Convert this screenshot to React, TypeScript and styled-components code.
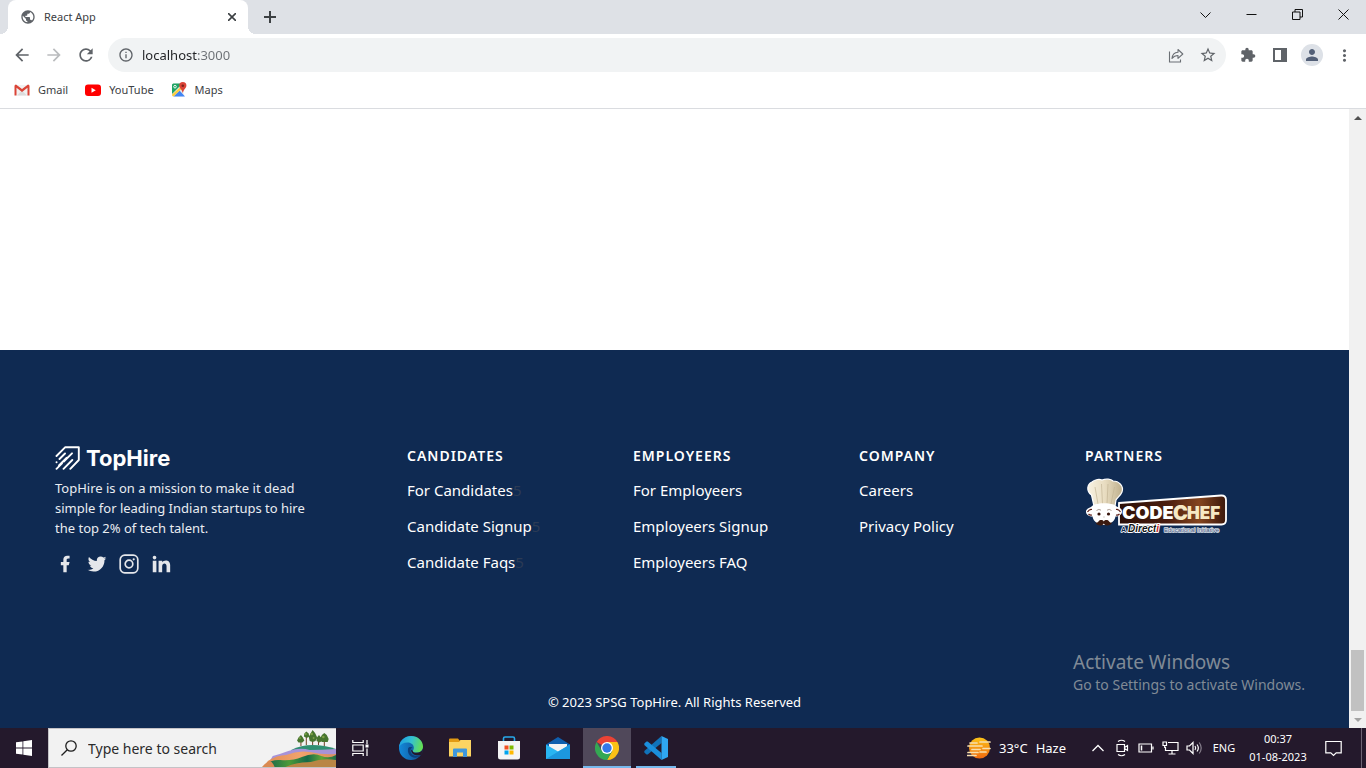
import React from 'react';
import styled, { createGlobalStyle } from 'styled-components';
import { RiFacebookFill, RiTwitterFill, RiLinkedinFill } from 'react-icons/ri';
import {
  MdPublic,
  MdExtension,
  MdArrowBack,
  MdArrowForward,
  MdRefresh,
  MdInfoOutline,
  MdStarBorder,
  MdPerson,
  MdMoreVert,
} from 'react-icons/md';

const GlobalStyle = createGlobalStyle`
  *, *::before, *::after { box-sizing: border-box; }
  body {
    margin: 0;
    font-family: 'Noto Sans', 'Open Sans', sans-serif;
    background: #fff;
    overflow: hidden;
  }
  button, input { font: inherit; color: inherit; }
  button { border: 0; padding: 0; background: none; cursor: pointer; }
  a { color: inherit; text-decoration: none; }
  ul { list-style: none; margin: 0; padding: 0; }
  svg { display: block; flex: none; }
`;

const Desktop = styled.div`
  display: flex;
  flex-direction: column;
  height: 100vh;
`;

/* ---------- Browser chrome ---------- */

const TabStrip = styled.header`
  display: flex;
  height: 34px;
  padding-left: 8px;
  background: #dee1e6;
`;

const Tab = styled.div`
  display: flex;
  align-items: center;
  position: relative;
  width: 240px;
  padding: 0 8px 0 12px;
  border-radius: 8px 8px 0 0;
  background: #fff;
  color: #3c4043;
  font-size: 11px;

  &::before,
  &::after {
    content: '';
    position: absolute;
    bottom: 0;
    width: 8px;
    height: 8px;
  }
  &::before {
    left: -8px;
    background: radial-gradient(circle at 0 0, transparent 8px, #fff 8px);
  }
  &::after {
    right: -8px;
    background: radial-gradient(circle at 100% 0, transparent 8px, #fff 8px);
  }
`;

const TabTitle = styled.span`
  flex: 1;
  margin-left: 8px;
  line-height: 14px;
`;

const IconButton = styled.button<{ $size?: number; $color?: string }>`
  display: flex;
  flex: none;
  align-items: center;
  justify-content: center;
  width: ${({ $size = 28 }) => $size}px;
  height: ${({ $size = 28 }) => $size}px;
  color: ${({ $color = '#5f6368' }) => $color};
`;

const NewTab = styled(IconButton)`
  margin: 3px 0 0 8px;
`;

const WindowControls = styled.div`
  display: flex;
  margin-left: auto;
`;

const WindowButton = styled.button`
  display: flex;
  align-items: center;
  justify-content: center;
  width: 46px;
  height: 28px;
`;

const Toolbar = styled.nav`
  display: flex;
  flex: none;
  align-items: center;
  gap: 4px;
  height: 42px;
  padding: 0 8px;
`;

const Omnibox = styled.form`
  display: flex;
  flex: 1;
  align-items: center;
  gap: 4px;
  height: 34px;
  margin: 0 4px;
  padding: 0 4px 0 10px;
  border-radius: 17px;
  background: #f1f3f4;
  color: #5f6368;
`;

const AddressInput = styled.input`
  flex: 1;
  min-width: 0;
  margin-left: 4px;
  padding: 0;
  border: 0;
  outline: 0;
  background: linear-gradient(90deg, #202124 56px, #6b6f74 56px);
  background-clip: text;
  -webkit-text-fill-color: transparent;
  font-size: 13px;
`;

const Avatar = styled.span`
  display: flex;
  align-items: center;
  justify-content: center;
  width: 22px;
  height: 22px;
  border-radius: 50%;
  background: #dde1e7;
  color: #525f77;
`;

const Bookmarks = styled.nav`
  display: flex;
  flex: none;
  gap: 1px;
  height: 33px;
  padding: 0 6px 4px;
  border-bottom: 1px solid #dadce0;
  color: #3c4043;
  font-size: 11px;
  line-height: 14px;
`;

const Bookmark = styled.a`
  display: flex;
  align-items: center;
  gap: 8px;
  padding: 0 8px;
`;

/* ---------- Page ---------- */

const Viewport = styled.div`
  display: flex;
  flex: 1;
  min-height: 0;
  position: relative;
`;

const Page = styled.main`
  display: flex;
  flex: 1;
  flex-direction: column;
  justify-content: flex-end;
  overflow: hidden;
  background: #fff;
`;

const Footer = styled.footer`
  background: #0f2a52;
  color: #fff;
`;

const FooterColumns = styled.div`
  display: grid;
  grid-template-columns: 352fr 226fr 226fr 226fr 210fr;
  padding: 96px 54px 96px 55px;
`;

const Brand = styled.a`
  display: flex;
  align-items: center;
  gap: 6px;
  height: 24px;
  font-family: Inter, sans-serif;
  font-size: 22px;
  font-weight: 700;
  line-height: 24px;
`;

const Mission = styled.p`
  max-width: 264px;
  margin: 8px 0 16px;
  color: #e9ecf1;
  font-size: 13px;
  line-height: 20px;
`;

const SocialLinks = styled.div`
  display: flex;
  gap: 12px;
  color: #e5e7eb;
`;

const SocialLink = styled.a`
  display: flex;
  align-items: center;
  justify-content: center;
  width: 20px;
  height: 20px;
`;

const ColumnHeading = styled.h2`
  margin: 0 0 12px;
  font-size: 14px;
  font-weight: 600;
  letter-spacing: 1px;
  line-height: 20px;
`;

const LinkList = styled.ul`
  display: grid;
  gap: 12px;
  font-size: 15px;
  line-height: 24px;
`;

const FaintMark = styled.span`
  color: #2c3b55;
`;

const Copyright = styled.p`
  margin: 0;
  padding: 22px 16px 16px;
  font-size: 13px;
  line-height: 20px;
  text-align: center;
`;

const Scrollbar = styled.div`
  display: flex;
  flex-direction: column;
  width: 17px;
  background: #f1f1f1;
`;

const ScrollArrow = styled(IconButton)`
  width: 17px;
  height: 17px;
`;

const ScrollTrack = styled.div`
  display: flex;
  flex: 1;
  flex-direction: column;
  justify-content: flex-end;
  padding: 0 2px;
`;

const ScrollThumb = styled.div`
  height: 61px;
  background: #c1c1c1;
`;

const Watermark = styled.div`
  position: absolute;
  right: 57px;
  bottom: 32px;
  width: 236px;
  color: #808a96;
  font-size: 14px;
  line-height: 22px;
  white-space: nowrap;
`;

const WatermarkTitle = styled.div`
  font-size: 19px;
  line-height: 24px;
`;

/* ---------- Taskbar ---------- */

const Taskbar = styled.footer`
  display: flex;
  flex: none;
  height: 40px;
  background: #24192c;
  color: #fff;
`;

const TaskButton = styled.button<{ $active?: boolean }>`
  display: flex;
  align-items: center;
  justify-content: center;
  width: 48px;
  background: ${({ $active }) => ($active ? '#50485a' : 'none')};
`;

const AppButton = styled(TaskButton)<{ $open?: boolean }>`
  position: relative;

  &::after {
    content: '';
    display: ${({ $open, $active }) => ($open || $active ? 'block' : 'none')};
    position: absolute;
    right: ${({ $active }) => ($active ? 0 : 4)}px;
    bottom: 0;
    left: ${({ $active }) => ($active ? 0 : 4)}px;
    height: 2px;
    background: #76b9ed;
  }
`;

const PinnedApps = styled.div`
  display: flex;
  gap: 1px;
  margin-left: 3px;
`;

const SearchBox = styled.label`
  display: flex;
  align-items: center;
  width: 288px;
  padding-left: 12px;
  border: 1px solid #c4c2c6;
  border-right: 0;
  background: #f2f2f2;
  color: #1f1f1f;
`;

const SearchInput = styled.input`
  flex: 1;
  min-width: 0;
  margin-left: 11px;
  padding: 0;
  border: 0;
  outline: 0;
  background: none;
  font-size: 14px;

  &::placeholder {
    color: #2b2b2b;
    opacity: 1;
  }
`;

const Tray = styled.div`
  display: flex;
  margin-left: auto;
  padding-right: 14px;
  background: linear-gradient(90deg, transparent calc(100% - 5px), #6d6474 calc(100% - 5px), #6d6474 calc(100% - 4px), transparent calc(100% - 4px));
`;

const Weather = styled.button`
  display: flex;
  align-items: center;
  gap: 8px;
  width: 119px;
  font-size: 13px;
  white-space: nowrap;
`;

const TrayButton = styled.button<{ $width?: number }>`
  display: flex;
  align-items: center;
  justify-content: center;
  width: ${({ $width = 24 }) => $width}px;
  font-size: 11px;
  line-height: 18px;
`;

/* ---------- Drawings ---------- */

const GmailIcon = () => (
  <svg width="16" height="16" viewBox="0 0 16 16">
    <path d="M1.500 3h13v10.500h-13z" fill="#f1f1f1" />
    <path d="m3 13.500 5-5 5 5z" fill="#dcdcdc" />
    <path d="M.5 4Q.5 2.500 2 2.500L8 7l6-4.500q1.500 0 1.500 1.500v9.500h-2V5.800L8 10 2.500 5.800v7.700h-2z" fill="#db4437" />
  </svg>
);

const YouTubeIcon = () => (
  <svg width="16" height="16" viewBox="0 0 16 16">
    <rect y="2.500" width="16" height="11.500" rx="3" fill="#f00" />
    <path d="M6.500 5.700v5l4.300-2.500z" fill="#fff" />
  </svg>
);

const MapsIcon = () => (
  <svg width="16" height="16" viewBox="0 0 16 16">
    <path d="M1 3q0-1.500 1.500-1.500h10v13H2.500Q1 14.500 1 13z" fill="#e9e9e9" />
    <path d="M1 3q0-1.500 1.500-1.500h9L1 12z" fill="#1fa463" />
    <path d="m2.500 14.500 6-6 5.500 6z" fill="#4285f4" />
    <path d="M1 12.500 9.500 5l1.500 1.500-8.500 8Q1 14.500 1 12.500z" fill="#fbcd3f" />
    <circle cx="4" cy="4.700" r="1.300" fill="none" stroke="#fff" strokeWidth=".9" />
    <path d="M11.800 0a3.600 3.600 0 0 0-3.600 3.600c0 2.600 2.600 3.700 3.600 7.400 1-3.700 3.600-4.800 3.600-7.400A3.600 3.600 0 0 0 11.800 0z" fill="#db4437" />
    <circle cx="11.800" cy="3.700" r="1.300" fill="#7b231c" />
  </svg>
);

const ShareIcon = () => (
  <svg width="18" height="18" viewBox="0 0 18 18" fill="none" stroke="#6b6f74" strokeWidth="1.100">
    <path d="M2.500 5.500v10.500h11v-2.500" />
    <path d="M5 12.500c.4-4 2.700-6 6-6.200V3.500l4.800 4.500-4.800 4.300V9.500c-2.600 0-4.300.8-6 3z" strokeLinejoin="round" />
  </svg>
);

const SidePanelIcon = () => (
  <svg width="16" height="16" viewBox="0 0 16 16">
    <path d="M1 1h14v14H1zM3 3v10h6V3z" fill="#5f6368" fillRule="evenodd" />
  </svg>
);

const BrandMark = () => (
  <svg width="25" height="24" viewBox="0 0 25 24" fill="none" stroke="#fff" strokeWidth="1.900" strokeLinecap="round">
    <path d="M1.500 10 10.300 1.200H23.800V14l-8.500 8.800" strokeLinejoin="round" />
    <path d="m4.500 13 5.500-5.500M1.500 16.200h.1M1.500 22.800 7 17.300M8.800 15.500 17 7.300M4 19.300l7.500-7.500M8.500 22.800 17.300 14" />
  </svg>
);

const InstagramIcon = () => (
  <svg width="20" height="20" viewBox="0 0 20 20" fill="none" stroke="currentColor" strokeWidth="1.700">
    <rect x="1.200" y="1.200" width="17.600" height="17.600" rx="4.500" />
    <circle cx="10" cy="10" r="3.800" />
    <circle cx="14.700" cy="5.300" r="1.100" fill="currentColor" stroke="none" />
  </svg>
);

const CodeChefLogo = () => (
  <svg width="144" height="58" viewBox="0 0 144 58" role="img" aria-label="CodeChef, a Directi educational initiative">
    <defs>
      <linearGradient id="board" x1="0" x2="1">
        <stop offset="0" stopColor="#2a0f08" />
        <stop offset=".45" stopColor="#4a1d0e" />
        <stop offset=".75" stopColor="#84451f" />
        <stop offset="1" stopColor="#3a170b" />
      </linearGradient>
      <linearGradient id="hat" x1="0" x2="1">
        <stop offset="0" stopColor="#f8f2e2" />
        <stop offset=".5" stopColor="#e8dcc0" />
        <stop offset="1" stopColor="#bdae8b" />
      </linearGradient>
    </defs>
    <path d="m34 25 102-7.500q5-.3 5 4.500v20q0 4.500-4.500 4.500H34z" fill="url(#board)" stroke="#fff" strokeWidth="1.800" />
    <path d="M9 28 6.500 17C1 13 2 6 7 4c3-3 8-3 10-2 4-1.500 9-1 11 1 6 0 11 5 9 11-1 3-5 6-6 8l-1 6z" fill="url(#hat)" stroke="#fff" strokeWidth="1.200" />
    <path d="m10 9 3 17M16.500 6l1 20M23 6l-1 20M29.500 9 26 26" fill="none" stroke="#c3b595" strokeWidth=".7" />
    <path d="M8 27c6-2.500 16-2.500 22 0 1 2.500 7 2 7 6.500 0 3.500-3.500 5-6.500 5-1 5.500-6 8.500-11.500 8.500S8.500 44 7.500 38.500c-3.500 0-6.500-1.500-6.500-5S7 29.500 8 27z" fill="#fff" />
    <path d="M2.500 34q2-3 4.500-2.500M35.500 34q-2-3-4.500-2.500M3.500 36q1.500 1.500 3.500 1M34.500 36q-1.500 1.500-3.500 1" fill="none" stroke="#5b1a12" strokeWidth="1.200" />
    <path d="M11.500 32.500q2.500-2 4.500-.3M22 32.200q2.200-1.700 4.500.3" fill="none" stroke="#8a7467" strokeWidth=".7" />
    <circle cx="14" cy="36" r="1.600" fill="#3a160d" />
    <circle cx="23.500" cy="36" r="1.600" fill="#3a160d" />
    <path d="M18.500 39q.5.800 1 0" fill="none" stroke="#8a7467" strokeWidth=".7" />
    <path d="M18.800 43.500c-1-1.800-4-2-5.300 0-.8 1.200-2 1.500-3 .7 1 4 7.300 4.300 8.300 1.300 1 3 7.300 2.700 8.300-1.300-1 .8-2.200.5-3-.7-1.300-2-4.300-1.800-5.300 0z" fill="#3b1a10" />
    <g fontFamily="Inter, sans-serif" fontWeight="900" fontSize="18">
      <text x="37" y="41" fill="#fff">CODE</text>
      <text x="88" y="42" fontSize="20" fill="#f6e8c4">C</text>
      <text x="102" y="41" fontSize="17" fill="#f6e8c4">HEF</text>
    </g>
    <g fontFamily="'Liberation Sans', sans-serif" paintOrder="stroke" strokeLinejoin="round">
      <text x="36" y="54" fontSize="7" fontWeight="700" fill="#0f2a52" stroke="#fff" strokeWidth="1.500">A</text>
      <text x="43" y="54" fontSize="10" fontWeight="700" fontStyle="italic" fill="#111" stroke="#fff" strokeWidth="2">
        Direct<tspan fill="#c6201a">i</tspan>
      </text>
      <text x="79" y="54" fontSize="6" fill="#38507a" stroke="#dfe4ec" strokeWidth="1.500">Educational Initiative</text>
    </g>
  </svg>
);

const SearchScene = () => (
  <svg width="74" height="38" viewBox="0 0 76 38" preserveAspectRatio="none" aria-hidden="true">
    <defs>
      <linearGradient id="sand" x1="0" x2="1">
        <stop offset="0" stopColor="#e08a52" />
        <stop offset=".5" stopColor="#f2a36c" />
        <stop offset="1" stopColor="#d98f5c" />
      </linearGradient>
      <linearGradient id="grass" x1="0" x2="1">
        <stop offset="0" stopColor="#0e5c50" />
        <stop offset=".35" stopColor="#4c9a38" />
        <stop offset=".6" stopColor="#15694a" />
        <stop offset=".8" stopColor="#5fa437" />
        <stop offset="1" stopColor="#1d6b46" />
      </linearGradient>
    </defs>
    <path d="M30 21q10-5 22-5 12 0 24 4v6H30z" fill="#2f8f72" />
    <path d="M11 27q8-2 16-5 12-4 22-1 12 0 27-1v12H8z" fill="#a793d8" />
    <path d="M6 32q9-6 19-6 12-5 24-3 14 3 27 2v15H1z" fill="url(#sand)" />
    <path d="M2 38q6-8 17-7 12 1 22-3 12-5 20-1 8 3 15-1v13z" fill="url(#grass)" />
    <path d="M24 38q12-5 26-5 12-4 26-2v8z" fill="#b98545" />
    <path d="M0 38q3-4 8-6 3 1 5 6z" fill="#d98a52" />
    <path d="M40 17v-6M45.500 16V5M52 16V6M58 16V9M64 17V9" stroke="#6b3d22" strokeWidth="1" />
    <g fill="#47752f">
      <path d="m40 6 2 2.500 1.500 3-2 2h-4l-1.500-2 1.500-3zM45.500 2.500l2.500 2 .5 3-2.500 1.500-3-1.500.5-3zM52 1l2.500 3 2 4-1.500 4-3 1-3-1-1-4 1.500-3zM58.500 6l2.500 3 .5 3-2.500 1.500-3-1.500V9zM64 4l2.500 2 2 4-1 3h-6l-2-3 2-4z" />
    </g>
    <g fill="#7da046">
      <circle cx="39" cy="9" r="1" />
      <circle cx="45" cy="5" r="1" />
      <circle cx="51" cy="5" r="1.300" />
      <circle cx="53" cy="9" r="1" />
      <circle cx="63" cy="8" r="1.300" />
    </g>
  </svg>
);

const StartIcon = () => (
  <svg width="16" height="16" viewBox="0 0 16 16" fill="#fff">
    <path d="m0 2.300 6.500-.9v6.200H0zM7.300 1.300 16 0v7.600H7.300zM0 8.400h6.500v6.200L0 13.700zM7.300 8.400H16V16l-8.700-1.300z" />
  </svg>
);

const TaskViewIcon = () => (
  <svg width="17" height="16" viewBox="0 0 17 16" fill="none" stroke="#fff" strokeWidth="1.200">
    <path d="M.8 0v2.500h10.400V0M.8 16v-2.500h10.400V16M.8 5h10.400v6H.8zM15 0v4M15 8.500V16" />
    <path d="M13.500 4.500h3v3h-3z" fill="#fff" stroke="none" />
  </svg>
);

const EdgeIcon = () => (
  <svg width="24" height="24" viewBox="0 0 24 24">
    <defs>
      <linearGradient id="edgeTop" x1="0" x2="1" y1=".3" y2=".5">
        <stop offset="0" stopColor="#1b9de2" />
        <stop offset=".5" stopColor="#35c1d0" />
        <stop offset="1" stopColor="#66e04f" />
      </linearGradient>
      <linearGradient id="edgeLow" x1="0" x2="1">
        <stop offset="0" stopColor="#1389da" />
        <stop offset="1" stopColor="#114a8b" />
      </linearGradient>
    </defs>
    <circle cx="12" cy="12" r="12" fill="url(#edgeLow)" />
    <path d="M0 11C1 4 6 0 12 0c7 0 12 5 12 10.500 0 4-3 6-6.200 6-3 0-4.300-1-4-1.800.3-.8 1.200-1.500 1-3.500C14.300 8 11.500 6.500 8.500 6.500 4.500 6.500 1.500 8.500 0 11z" fill="url(#edgeTop)" />
    <path d="M9 13c-.8 6 4 9.500 8.500 8.500 2-.4 3.500-1.300 4.500-2-5 2-10.500-.5-10.500-5 0-1.500.8-2.500 2-3C11 10.500 9.300 11 9 13z" fill="#0c3f7c" />
    <path d="M24 12.500c-1 3-3.500 4.200-6.200 4.200-3 0-4.300-1-4-1.800l-1.500-1.500c-1 4 4 7 9.700 5.600 1-1.500 2-4 2-6.500z" fill="#24192c" />
  </svg>
);

const ExplorerIcon = () => (
  <svg width="22" height="20" viewBox="0 0 22 20">
    <path d="M0 1.500Q0 .5 1 .5h8l1.500 2H22V7H0z" fill="#e29a13" />
    <path d="M0 4h10l1.500-2H22v16.500H0z" fill="#fcd462" />
    <path d="M4 19v-7.500q0-1 1-1h12q1 0 1 1V19h-4v-4.500H8V19z" fill="#3f97dc" />
  </svg>
);

const StoreIcon = () => (
  <svg width="24" height="24" viewBox="0 0 24 24">
    <path d="M6.500 6V2.500q0-1.500 1.500-1.500h8q1.500 0 1.500 1.500V6" fill="none" stroke="#27a9ea" strokeWidth="1.600" />
    <path d="M1 5h22v16q0 2.500-2.500 2.500h-17Q1 23.500 1 21z" fill="#f4f4f5" />
    <path d="M7.500 9.500h4v4h-4z" fill="#f25022" />
    <path d="M12.500 9.500h4v4h-4z" fill="#7fba00" />
    <path d="M7.500 14.500h4v4h-4z" fill="#00a4ef" />
    <path d="M12.500 14.500h4v4h-4z" fill="#ffb900" />
  </svg>
);

const MailIcon = () => (
  <svg width="24" height="24" viewBox="0 0 24 24">
    <path d="M0 8.500 12 1l12 7.500v6H0z" fill="#0f5fae" />
    <path d="M3 8h18v5l-9 5-9-5z" fill="#f3f3f3" />
    <path d="m0 8.500 12 7 12-7V23H0z" fill="#29b5f2" />
    <path d="M0 23 24 8.500V23z" fill="#1c97de" />
  </svg>
);

const ChromeIcon = () => (
  <svg width="24" height="24" viewBox="0 0 24 24">
    <path d="M12 12 1.600 6A12 12 0 0 1 22.400 6z" fill="#ea4335" />
    <path d="M12 12V6h10.400A12 12 0 0 1 12 24l5.200-9z" fill="#fbc116" />
    <path d="M1.600 6A12 12 0 0 0 12 24l5.200-9H6.800z" fill="#34a853" />
    <circle cx="12" cy="12" r="6" fill="#fff" />
    <circle cx="12" cy="12" r="4.700" fill="#3478e8" />
  </svg>
);

const VsCodeIcon = () => (
  <svg width="24" height="24" viewBox="0 0 24 24">
    <path d="M17.500 0v7L3.700 18.400l-1.200.1-2.200-2V15z" fill="#1072b9" />
    <path d="M17.500 24v-7L3.700 5.600l-1.200-.1-2.200 2V9z" fill="#1b8fdc" />
    <path d="M17.500 0 24 3v18l-6.500 3z" fill="#2fa7f2" />
  </svg>
);

const WeatherIcon = () => (
  <svg width="24" height="22" viewBox="0 0 24 22">
    <defs>
      <linearGradient id="sun" x1="0" x2="0" y1="0" y2="1">
        <stop offset="0" stopColor="#fcc419" />
        <stop offset="1" stopColor="#f0690f" />
      </linearGradient>
    </defs>
    <circle cx="12.500" cy="11" r="10.500" fill="url(#sun)" />
    <path d="M3 6h7M13 5h10M1 9h14M5 12.500h8M16 11.500h7M1 15.500h10M13 15h6M0 18.500h9" stroke="#f8dfae" strokeWidth="1.700" strokeLinecap="round" />
  </svg>
);

const CameraIcon = () => (
  <svg width="14" height="18" viewBox="0 0 14 18" fill="none" stroke="#fff" strokeWidth="1.200">
    <path d="M3 2.500q3.500-2.500 7 0M3 15.500q3.500 2.500 7 0M2 5.500h7.500v7H2zM9.500 8.500l3-2v5l-3-2" />
  </svg>
);

const BatteryIcon = () => (
  <svg width="16" height="10" viewBox="0 0 16 10" fill="none" stroke="#fff">
    <path d="M1 1h12.500v8H1zM15 3.500v3" strokeWidth="1.200" />
    <path d="M3.500 2.500v5" strokeWidth="1.500" />
  </svg>
);

const NetworkIcon = () => (
  <svg width="17" height="14" viewBox="0 0 17 14" fill="none" stroke="#fff" strokeWidth="1.200">
    <path d="M6 1.500h10v8H3.500V6M10 9.500V13M6.500 13h7M1 1h3.500v3.500H1zM2.700 4.500V7" />
  </svg>
);

const VolumeIcon = () => (
  <svg width="17" height="14" viewBox="0 0 17 14" fill="none" stroke="#fff" strokeWidth="1.200">
    <path d="M1 5h2.500L7 1.500v11L3.500 9H1zM9 5q1.500 2 0 4M11 3.500q2.700 3.500 0 7" />
    <path d="M13.200 1.500q4 5.500 0 11" stroke="#857e8b" />
  </svg>
);

/* ---------- Data ---------- */

const bookmarks = [
  { label: 'Gmail', icon: <GmailIcon /> },
  { label: 'YouTube', icon: <YouTubeIcon /> },
  { label: 'Maps', icon: <MapsIcon /> },
];

const columns = [
  { title: 'CANDIDATES', links: ['For Candidates', 'Candidate Signup', 'Candidate Faqs'], mark: '5' },
  { title: 'EMPLOYEERS', links: ['For Employeers', 'Employeers Signup', 'Employeers FAQ'] },
  { title: 'COMPANY', links: ['Careers', 'Privacy Policy'] },
];

const socials = [
  { label: 'Facebook', icon: <RiFacebookFill size={20} /> },
  { label: 'Twitter', icon: <RiTwitterFill size={22} /> },
  { label: 'Instagram', icon: <InstagramIcon /> },
  { label: 'LinkedIn', icon: <RiLinkedinFill size={22} /> },
];

const apps = [
  { label: 'Microsoft Edge', icon: <EdgeIcon /> },
  { label: 'File Explorer', icon: <ExplorerIcon /> },
  { label: 'Microsoft Store', icon: <StoreIcon /> },
  { label: 'Mail', icon: <MailIcon /> },
  { label: 'Google Chrome', icon: <ChromeIcon />, active: true },
  { label: 'Visual Studio Code', icon: <VsCodeIcon />, open: true },
];

const trayItems = [
  { label: 'Meet now', icon: <CameraIcon /> },
  { label: 'Battery', icon: <BatteryIcon /> },
  { label: 'Network', icon: <NetworkIcon /> },
  { label: 'Volume', icon: <VolumeIcon /> },
];

const windowControls = [
  { label: 'Search tabs', d: 'M.5 3.500 5.500 8.500 10.500 3.500' },
  { label: 'Minimize', d: 'M.5 5.500h10' },
  { label: 'Restore', d: 'M.5 3h7.500v7.500H.5zM3 3V.5h7.500V8H8' },
  { label: 'Close', d: 'm.5.5 10 10M10.500.5l-10 10' },
];

export default function App() {
  return (
    <Desktop>
      <GlobalStyle />
      <TabStrip>
        <Tab>
          <MdPublic size={16} color="#5f6368" />
          <TabTitle>React App</TabTitle>
          <IconButton $size={16} $color="#3c4043" aria-label="Close tab">
            <svg width="8" height="8" viewBox="0 0 8 8" stroke="currentColor" strokeWidth="1.600">
              <path d="m0 0 8 8M8 0 0 8" />
            </svg>
          </IconButton>
        </Tab>
        <NewTab $color="#3c4043" aria-label="New tab">
          <svg width="12" height="12" viewBox="0 0 12 12" stroke="currentColor" strokeWidth="2">
            <path d="M6 0v12M0 6h12" />
          </svg>
        </NewTab>
        <WindowControls>
          {windowControls.map(({ label, d }) => (
            <WindowButton key={label} aria-label={label}>
              <svg width="11" height="11" viewBox="0 0 11 11" fill="none" stroke="#111">
                <path d={d} />
              </svg>
            </WindowButton>
          ))}
        </WindowControls>
      </TabStrip>

      <Toolbar aria-label="Browser toolbar">
        <IconButton aria-label="Back"><MdArrowBack size={20} /></IconButton>
        <IconButton $color="#babcbe" aria-label="Forward"><MdArrowForward size={20} /></IconButton>
        <IconButton aria-label="Reload"><MdRefresh size={20} /></IconButton>
        <Omnibox>
          <MdInfoOutline size={16} />
          <AddressInput aria-label="Address" defaultValue="localhost:3000" />
          <IconButton type="button" aria-label="Share"><ShareIcon /></IconButton>
          <IconButton type="button" aria-label="Bookmark this page"><MdStarBorder size={18} /></IconButton>
        </Omnibox>
        <IconButton aria-label="Extensions"><MdExtension size={16} /></IconButton>
        <IconButton aria-label="Side panel"><SidePanelIcon /></IconButton>
        <IconButton aria-label="Profile"><Avatar><MdPerson size={18} /></Avatar></IconButton>
        <IconButton aria-label="Menu"><MdMoreVert size={19} /></IconButton>
      </Toolbar>

      <Bookmarks aria-label="Bookmarks">
        {bookmarks.map(({ label, icon }) => (
          <Bookmark key={label} href="#">{icon}{label}</Bookmark>
        ))}
      </Bookmarks>

      <Viewport>
        <Page>
          <Footer>
            <FooterColumns>
              <section>
                <Brand href="#"><BrandMark />TopHire</Brand>
                <Mission>
                  TopHire is on a mission to make it dead simple for leading Indian startups to hire the top 2% of tech talent.
                </Mission>
                <SocialLinks>
                  {socials.map(({ label, icon }) => (
                    <SocialLink key={label} href="#" aria-label={label}>{icon}</SocialLink>
                  ))}
                </SocialLinks>
              </section>
              {columns.map(({ title, links, mark }) => (
                <section key={title}>
                  <ColumnHeading>{title}</ColumnHeading>
                  <LinkList>
                    {links.map((link) => (
                      <li key={link}>
                        <a href="#">{link}</a>
                        {mark && <FaintMark>{mark}</FaintMark>}
                      </li>
                    ))}
                  </LinkList>
                </section>
              ))}
              <section>
                <ColumnHeading>PARTNERS</ColumnHeading>
                <CodeChefLogo />
              </section>
            </FooterColumns>
            <Copyright>© 2023 SPSG TopHire. All Rights Reserved</Copyright>
          </Footer>
        </Page>
        <Scrollbar>
          <ScrollArrow $color="#505050" aria-label="Scroll up">
            <svg width="8" height="4" viewBox="0 0 8 4" fill="currentColor"><path d="m0 4 4-4 4 4z" /></svg>
          </ScrollArrow>
          <ScrollTrack><ScrollThumb /></ScrollTrack>
          <ScrollArrow $color="#a3a3a3" aria-label="Scroll down">
            <svg width="8" height="4" viewBox="0 0 8 4" fill="currentColor"><path d="m0 0 4 4 4-4z" /></svg>
          </ScrollArrow>
        </Scrollbar>
        <Watermark>
          <WatermarkTitle>Activate Windows</WatermarkTitle>
          Go to Settings to activate Windows.
        </Watermark>
      </Viewport>

      <Taskbar>
        <TaskButton aria-label="Start"><StartIcon /></TaskButton>
        <SearchBox>
          <svg width="16" height="16" viewBox="0 0 16 16" fill="none" stroke="#1f1f1f" strokeWidth="1.300">
            <circle cx="10" cy="6" r="5.200" />
            <path d="M6.300 9.700.5 15.500" />
          </svg>
          <SearchInput type="search" aria-label="Search" placeholder="Type here to search" />
          <SearchScene />
        </SearchBox>
        <TaskButton aria-label="Task view"><TaskViewIcon /></TaskButton>
        <PinnedApps>
          {apps.map(({ label, icon, active, open }) => (
            <AppButton key={label} $active={active} $open={open} aria-label={label}>{icon}</AppButton>
          ))}
        </PinnedApps>
        <Tray>
          <Weather>
            <WeatherIcon />
            <span>33°C</span>
            <span>Haze</span>
          </Weather>
          <TrayButton aria-label="Show hidden icons">
            <svg width="12" height="8" viewBox="0 0 12 8" fill="none" stroke="#fff" strokeWidth="1.300">
              <path d="m.5 7 5.500-5.500L11.500 7" />
            </svg>
          </TrayButton>
          {trayItems.map(({ label, icon }) => (
            <TrayButton key={label} aria-label={label}>{icon}</TrayButton>
          ))}
          <TrayButton $width={36}>ENG</TrayButton>
          <TrayButton $width={72}>
            <span>00:37<br />01-08-2023</span>
          </TrayButton>
          <TrayButton $width={38} aria-label="Notifications">
            <svg width="17" height="17" viewBox="0 0 17 17" fill="none" stroke="#fff" strokeWidth="1.200">
              <path d="M.8 1.500h15.400v11.300h-5l-2.700 2.700-2.700-2.700h-5z" />
            </svg>
          </TrayButton>
        </Tray>
      </Taskbar>
    </Desktop>
  );
}
